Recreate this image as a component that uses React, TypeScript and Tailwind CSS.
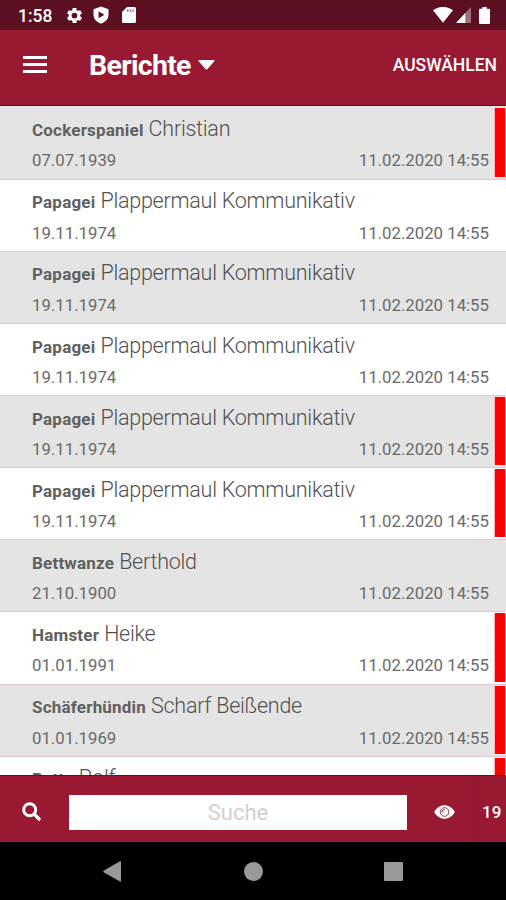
type Report = { kind: string; name: string; born?: string; unread?: boolean };

const reports: Report[] = [
  { kind: "Cockerspaniel", name: "Christian", born: "07.07.1939", unread: true },
  { kind: "Papagei", name: "Plappermaul Kommunikativ", born: "19.11.1974" },
  { kind: "Papagei", name: "Plappermaul Kommunikativ", born: "19.11.1974" },
  { kind: "Papagei", name: "Plappermaul Kommunikativ", born: "19.11.1974" },
  { kind: "Papagei", name: "Plappermaul Kommunikativ", born: "19.11.1974", unread: true },
  { kind: "Papagei", name: "Plappermaul Kommunikativ", born: "19.11.1974", unread: true },
  { kind: "Bettwanze", name: "Berthold", born: "21.10.1900" },
  { kind: "Hamster", name: "Heike", born: "01.01.1991", unread: true },
  { kind: "Schäferhündin", name: "Scharf Beißende", born: "01.01.1969", unread: true },
  { kind: "Ratte", name: "Rolf", unread: true },
];

function StatusBar() {
  return (
    <div className="flex h-[30px] shrink-0 items-center bg-[#5c0f20] pr-[16px] pl-[18px] text-white">
      <span className="w-[47px] pt-[3px] text-[17.500px] leading-none font-medium">1:58</span>
      <svg className="size-[19px]" viewBox="0 0 24 24" fill="currentColor">
        <path d="M19.14 12.94c.04-.3.06-.61.06-.94 0-.32-.02-.64-.07-.94l2.03-1.58a.49.49 0 0 0 .12-.61l-1.92-3.32a.488.488 0 0 0-.59-.22l-2.39.96c-.5-.38-1.03-.7-1.62-.94l-.36-2.54a.484.484 0 0 0-.48-.41h-3.84c-.24 0-.43.17-.47.41l-.36 2.54c-.59.24-1.13.57-1.62.94l-2.39-.96c-.22-.08-.47 0-.59.22L2.74 8.87c-.12.21-.08.47.12.61l2.03 1.58c-.05.3-.09.63-.09.94s.02.64.07.94l-2.03 1.58a.49.49 0 0 0-.12.61l1.92 3.32c.12.22.37.29.59.22l2.39-.96c.5.38 1.03.7 1.62.94l.36 2.54c.05.24.24.41.48.41h3.84c.24 0 .44-.17.47-.41l.36-2.54c.59-.24 1.13-.56 1.62-.94l2.39.96c.22.08.47 0 .59-.22l1.92-3.32c.12-.22.07-.47-.12-.61zM12 15.6A3.6 3.6 0 1 1 12 8.400a3.6 3.6 0 0 1 0 7.200z" />
      </svg>
      <svg className="ml-[9px] h-[18px] w-[16px]" viewBox="0 0 16 18" fill="currentColor" fillRule="evenodd">
        <path d="M8 .5 15.500 3.300V8.500C15.500 13 12.300 16.300 8 17.700 3.700 16.300.5 13 .5 8.500V3.300ZM5.600 5.200V12.200L11.400 8.700Z" />
      </svg>
      <svg className="ml-[13px] h-[16px] w-[14px]" viewBox="0 0 14 16">
        <path fill="white" d="M5 0H12.500Q14 0 14 1.500V14.500Q14 16 12.500 16H1.500Q0 16 0 14.500V5Z" />
        <path fill="#5c0f20" opacity=".55" d="M5 2.300H6.400V5H5ZM7.700 2.300H9.100V5H7.700ZM10.400 2.300H11.800V5H10.400Z" />
      </svg>
      <svg className="ml-auto h-[16px] w-[20px]" viewBox="0 0 20 16" fill="currentColor">
        <path d="M0 3.200C5.700-1.100 14.300-1.100 20 3.200L10 15.700Z" />
      </svg>
      <svg className="ml-[3px] h-[16px] w-[15px]" viewBox="0 0 15 16">
        <path fill="white" opacity=".4" d="M15 0V16H0Z" />
        <path fill="white" d="M9.300 6.080V16H0Z" />
      </svg>
      <svg className="ml-[8px] h-[17px] w-[11px]" viewBox="0 0 11 17" fill="currentColor">
        <path d="M3.300 0H7.700V1.800H9.800Q11 1.800 11 3V15.800Q11 17 9.800 17H1.200Q0 17 0 15.800V3Q0 1.800 1.200 1.800H3.300Z" />
      </svg>
    </div>
  );
}

function Header() {
  return (
    <header className="flex h-[76px] shrink-0 items-center border-b border-[#8c0010] bg-[#991932] pr-[9px] pb-[6px] pl-[23px] text-white">
      <button className="mb-[1px] flex w-[24px] flex-col gap-[4px]" aria-label="Menü">
        <span className="h-[3px] w-full bg-white" />
        <span className="h-[3px] w-full bg-white" />
        <span className="h-[3px] w-full bg-white" />
      </button>
      <h1 className="ml-[42px] w-[101px] pt-[3px] text-[28.500px] leading-none font-bold tracking-[-0.700px]">Berichte</h1>
      <svg className="ml-[8px] h-[10px] w-[17px]" viewBox="0 0 17 10" fill="currentColor">
        <path d="M1 0H16Q17 .3 16.300 1.200L9.300 9.200Q8.500 10 7.700 9.200L.7 1.200Q0 .3 1 0Z" />
      </svg>
      <button className="ml-auto pt-[2px] text-[17.500px] leading-none font-medium">AUSWÄHLEN</button>
    </header>
  );
}

function ReportRow({ report }: { report: Report }) {
  return (
    <li className="flex h-[72.15px] shrink-0 border-b border-[#dfc8cc] odd:bg-[#e4e4e4] even:bg-white">
      <div className="flex min-w-0 flex-1 flex-col pt-[7.700px] pr-[5px] pl-[32px] text-[#6a6a6a]">
        <div className="h-[32.300px] leading-[27px] whitespace-nowrap">
          <span className="mr-[5px] text-[17px] font-bold tracking-[0.200px] text-[#606060]">{report.kind}</span>
          <span className="text-[21.500px] font-light tracking-[-0.250px] text-[#505050]">{report.name}</span>
        </div>
        {report.born && (
          <div className="flex justify-between text-[16.800px] leading-[27px]">
            <span>{report.born}</span>
            <span>11.02.2020 14:55</span>
          </div>
        )}
      </div>
      <div className={report.unread ? "mt-[1px] mb-[2px] w-[12px] border-x border-[#ffb0b0] bg-[#ff0000]" : "w-[12px]"} />
    </li>
  );
}

export default function App() {
  return (
    <div className="flex h-[900px] w-[506px] flex-col overflow-hidden bg-black font-['Roboto','Liberation_Sans',sans-serif]">
      <StatusBar />
      <Header />
      <ul className="flex h-[669px] shrink-0 flex-col overflow-hidden bg-[#e4e4e4] pt-[1.400px]">
        {reports.map((report, i) => (
          <ReportRow key={i} report={report} />
        ))}
      </ul>
      <footer className="flex h-[67px] shrink-0 items-center border-t border-[#8c0010] bg-[#991932] text-white">
        <div className="flex w-[69px] pt-[5px] pl-[22px]">
          <svg className="size-[19px]" viewBox="0 0 19 19" fill="none" stroke="currentColor" strokeLinecap="round">
            <circle cx="7.700" cy="7.700" r="6" strokeWidth="2.900" />
            <path d="M12.200 12.200 17 17" strokeWidth="3.200" />
          </svg>
        </div>
        <input
          className="mt-[7px] h-[35px] w-[338px] bg-white text-center text-[22px] text-[#666] placeholder:text-[#d0d0d0]"
          placeholder="Suche"
        />
        <div className="flex w-[67px] justify-center pt-[6px] pl-[7px]">
          <svg className="h-[14px] w-[21px]" viewBox="0 0 21 14">
            <path fill="white" d="M.2 7C4.700-2 16.300-2 20.800 7 16.300 16 4.700 16 .2 7Z" />
            <circle cx="10.500" cy="7" r="4.300" fill="none" stroke="#991932" strokeWidth=".9" />
            <path d="M8 7A2.500 2.500 0 0 1 10.500 4.500" fill="none" stroke="#991932" strokeWidth="1" strokeLinecap="round" />
          </svg>
        </div>
        <div className="flex h-full flex-1 items-center border-l border-[#8d1930] pt-[7px] pl-[7px] text-[17px] font-medium">19</div>
      </footer>
      <nav className="flex h-[58px] shrink-0 items-center pl-[103px]">
        <svg className="h-[21px] w-[18px]" viewBox="0 0 18 21" fill="#999">
          <path d="M17 .3Q18 0 18 1V20Q18 21 17 20.600L.6 11.200Q0 10.500.6 9.800Z" />
        </svg>
        <div className="ml-[123px] size-[19px] rounded-full bg-[#999]" />
        <div className="ml-[121px] size-[19px] rounded-[1px] bg-[#999]" />
      </nav>
    </div>
  );
}
